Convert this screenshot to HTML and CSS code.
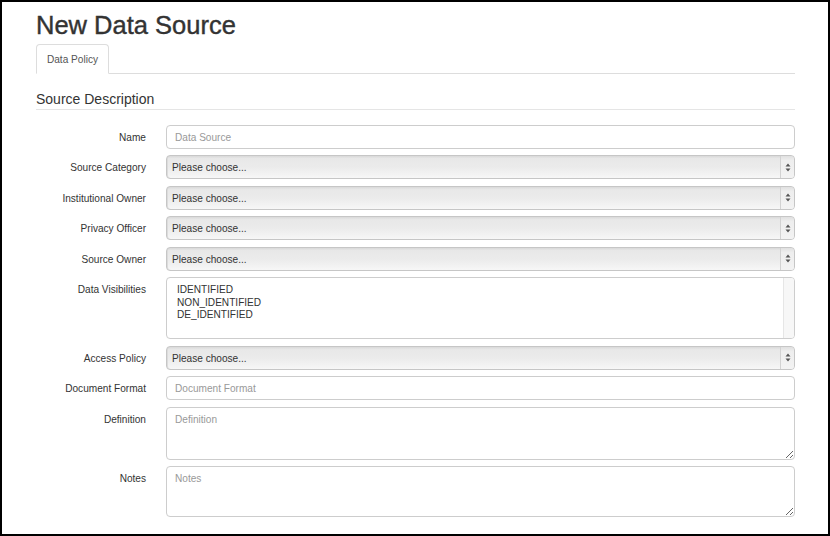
FILE: index.html
```html
<!DOCTYPE html>
<html>
<head>
<meta charset="utf-8">
<title>New Data Source</title>
<link rel="stylesheet" href="styles.css">
</head>
<body>
<div class="frame">
  <h1 class="title">New Data Source</h1>
  <ul class="tabs">
    <li class="tab active">Data Policy</li>
  </ul>
  <div class="legend">Source Description</div>
  <form class="form">
    <div class="row">
      <label class="label">Name</label>
      <input class="input" type="text" placeholder="Data Source">
    </div>
    <div class="row">
      <label class="label">Source Category</label>
      <div class="select"><span class="select-text">Please choose...</span><span class="select-btn"><svg width="6" height="9" viewBox="0 0 6 9"><path d="M3 0.5 L5.5 3.5 H0.5 Z M3 8.5 L5.5 5.5 H0.5 Z" fill="#555"/></svg></span></div>
    </div>
    <div class="row">
      <label class="label">Institutional Owner</label>
      <div class="select"><span class="select-text">Please choose...</span><span class="select-btn"><svg width="6" height="9" viewBox="0 0 6 9"><path d="M3 0.5 L5.5 3.5 H0.5 Z M3 8.5 L5.5 5.5 H0.5 Z" fill="#555"/></svg></span></div>
    </div>
    <div class="row">
      <label class="label">Privacy Officer</label>
      <div class="select"><span class="select-text">Please choose...</span><span class="select-btn"><svg width="6" height="9" viewBox="0 0 6 9"><path d="M3 0.5 L5.5 3.5 H0.5 Z M3 8.5 L5.5 5.5 H0.5 Z" fill="#555"/></svg></span></div>
    </div>
    <div class="row">
      <label class="label">Source Owner</label>
      <div class="select"><span class="select-text">Please choose...</span><span class="select-btn"><svg width="6" height="9" viewBox="0 0 6 9"><path d="M3 0.5 L5.5 3.5 H0.5 Z M3 8.5 L5.5 5.5 H0.5 Z" fill="#555"/></svg></span></div>
    </div>
    <div class="row">
      <label class="label">Data Visibilities</label>
      <div class="multi">
        <ul class="multi-list">
          <li>IDENTIFIED</li>
          <li>NON_IDENTIFIED</li>
          <li>DE_IDENTIFIED</li>
        </ul>
        <div class="multi-track"></div>
      </div>
    </div>
    <div class="row">
      <label class="label">Access Policy</label>
      <div class="select"><span class="select-text">Please choose...</span><span class="select-btn"><svg width="6" height="9" viewBox="0 0 6 9"><path d="M3 0.5 L5.5 3.5 H0.5 Z M3 8.5 L5.5 5.5 H0.5 Z" fill="#555"/></svg></span></div>
    </div>
    <div class="row">
      <label class="label">Document Format</label>
      <input class="input" type="text" placeholder="Document Format">
    </div>
    <div class="row">
      <label class="label">Definition</label>
      <textarea class="textarea def" placeholder="Definition"></textarea>
    </div>
    <div class="row">
      <label class="label">Notes</label>
      <textarea class="textarea notes" placeholder="Notes"></textarea>
    </div>
  </form>
</div>
</body>
</html>
```

FILE: styles.css
```css
* {
  box-sizing: border-box;
}

html, body {
  margin: 0;
  padding: 0;
  background: #fff;
}

body {
  font-family: "Liberation Sans", Arial, Helvetica, sans-serif;
  color: #333;
}

.frame {
  width: 830px;
  height: 536px;
  border: 2px solid #000;
  padding: 0 33px 0 34px;
  overflow: hidden;
}

.title {
  margin: 7.5px 0 0 0;
  font-size: 25.5px;
  line-height: 30px;
  font-weight: normal;
  color: #333;
  -webkit-text-stroke: 0.4px #333;
}

.tabs {
  list-style: none;
  margin: 4.5px 0 0 0;
  padding: 0;
  display: flex;
  border-bottom: 1px solid #ddd;
  height: 30px;
}

.tab {
  width: 73px;
  height: 30px;
  border: 1px solid #ddd;
  border-bottom-color: transparent;
  border-radius: 4px 4px 0 0;
  background: #fff;
  font-size: 10.1px;
  color: #555;
  display: flex;
  align-items: center;
  justify-content: center;
  margin-bottom: -1px;
}

.legend {
  margin-top: 14.5px;
  padding-top: 1px;
  font-size: 14px;
  line-height: 19px;
  color: #333;
  border-bottom: 1px solid #e5e5e5;
}

.form {
  margin-top: 15px;
  display: flex;
  flex-direction: column;
  gap: 6.5px;
}

.row {
  display: flex;
  align-items: flex-start;
  gap: 20px;
}

.label {
  width: 110px;
  height: 24px;
  flex: none;
  text-align: right;
  font-size: 10.1px;
  line-height: 22px;
  padding-top: 2px;
  color: #333;
}

.input {
  flex: 1;
  height: 24px;
  border: 1px solid #cdcdcd;
  border-radius: 4px;
  padding: 1px 8px 0 8px;
  font-family: inherit;
  font-size: 10.1px;
  color: #333;
  background: #fff;
  outline: none;
  margin: 0;
}

.input::placeholder,
.textarea::placeholder {
  color: #999;
}

.select {
  flex: 1;
  height: 24px;
  display: flex;
  align-items: stretch;
  border: 1px solid #c6c6c6;
  border-radius: 4px;
  background: linear-gradient(to bottom, #d9d9d9 0, #e8e8e8 12%, #ebebeb 50%, #f3f3f3 85%, #f7f7f7 100%);
  box-shadow: inset 1px 0 0 #dcdcdc;
  overflow: hidden;
}

.select-text {
  flex: 1;
  font-size: 10.1px;
  line-height: 22px;
  padding-top: 1px;
  padding-left: 5px;
  color: #333;
}

.select-btn {
  width: 14px;
  flex: none;
  border-left: 1px solid #d2d2d2;
  display: flex;
  align-items: center;
  justify-content: center;
  background: linear-gradient(to bottom, #e0e0e0 0, #eeeeee 20%, #f3f3f3 100%);
}

.multi {
  flex: 1;
  height: 62px;
  border: 1px solid #cdcdcd;
  border-radius: 4px;
  display: flex;
  background: #fff;
  overflow: hidden;
}

.multi-list {
  flex: 1;
  list-style: none;
  margin: 0;
  padding: 6px 10px 5px 10px;
  font-size: 10.1px;
  line-height: 12.6px;
  color: #333;
}

.multi-track {
  width: 11px;
  flex: none;
  background: #f7f7f7;
  border-left: 1px solid #e6e6e6;
}

.textarea {
  flex: 1;
  border: 1px solid #cdcdcd;
  border-radius: 4px;
  padding: 5px 8px;
  font-family: inherit;
  font-size: 10.1px;
  line-height: 13px;
  color: #333;
  background: #fff;
  resize: vertical;
  outline: none;
  margin: 0;
  overflow: hidden;
}

.textarea.def {
  height: 53px;
}

.textarea.notes {
  height: 51px;
}
```
